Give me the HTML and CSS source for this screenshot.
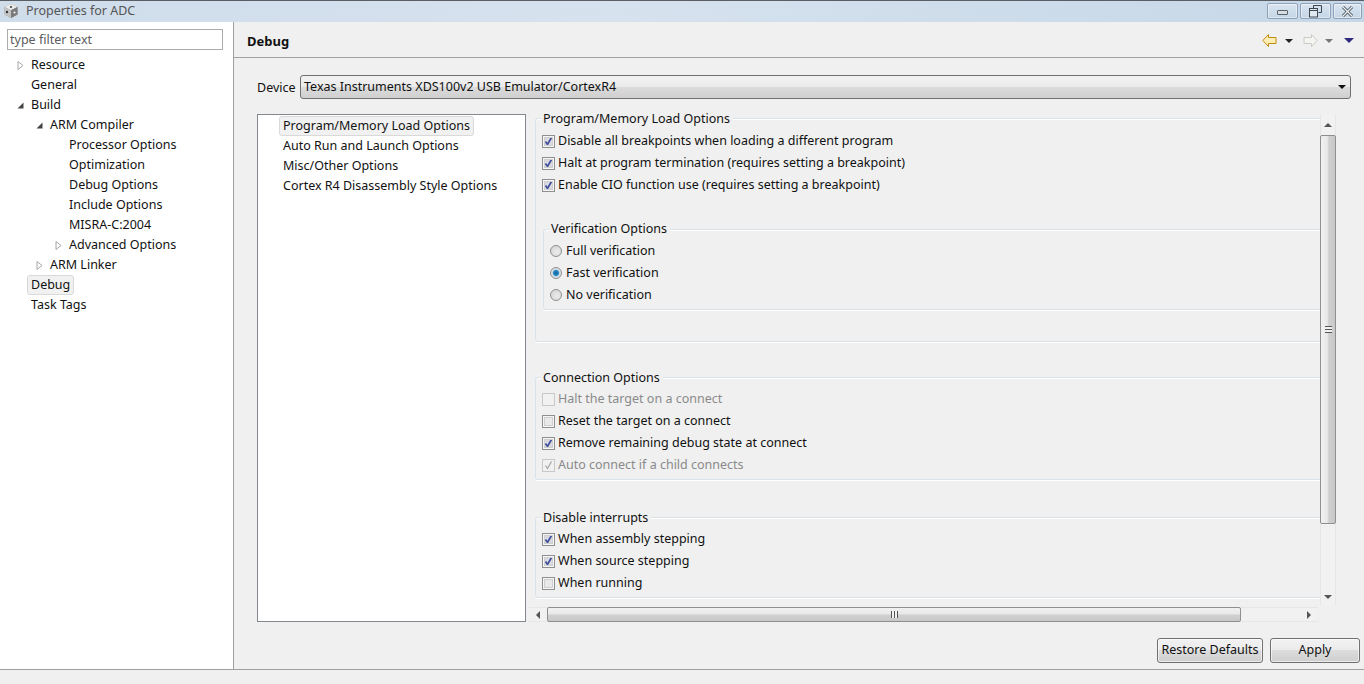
FILE: index.html
```html
<!DOCTYPE html>
<html lang="en">
<head>
<meta charset="utf-8">
<title>Properties for ADC</title>
<link rel="stylesheet" href="styles.css">
</head>
<body>
<div class="window">
  <header class="titlebar">
    <svg class="app-icon" width="16" height="16" viewBox="0 0 16 16"><path d="M8 1l6.500 3v7.500L8 15l-6.500-3.500V4z" fill="#8f8f8f"/><path d="M8 1l6.500 3L8 7.200 1.500 4z" fill="#ececec"/><path d="M1.500 4L8 7.200V15l-6.500-3.500z" fill="#c4c4c4"/><path d="M8 7.200L14.500 4v7.500L8 15z" fill="#7a7a7a"/><circle cx="8" cy="4" r="1.100" fill="#444"/><circle cx="4" cy="9" r="1.200" fill="#333"/><circle cx="11.500" cy="9.500" r="1.100" fill="#eee"/></svg>
    <span class="title-text">Properties for ADC</span>
    <div class="win-controls">
      <div class="win-btn win-min"><span class="min-glyph"></span></div>
      <div class="win-btn win-max"><svg width="13" height="13" viewBox="0 0 13 13"><path d="M4.500 3V.5h8v7H9.500" fill="none" stroke="#3c4650"/><rect x=".5" y="3.500" width="8" height="8.500" fill="#dfe7ef" stroke="#3c4650" stroke-width="1"/><path d="M1 5.500h7" stroke="#3c4650"/></svg></div>
      <div class="win-btn win-close"><svg width="13" height="11" viewBox="0 0 13 11"><path d="M2 1l9 9M11 1l-9 9" stroke="#47525c" stroke-width="3"/><path d="M2 1l9 9M11 1l-9 9" stroke="#f2f5f8" stroke-width="1.200"/></svg></div>
    </div>
  </header>

  <div class="main">
    <aside class="sidebar">
      <input class="filter" type="text" placeholder="type filter text">
      <ul class="tree">
        <li class="node l0"><svg class="twist" width="7" height="9" viewBox="0 0 7 9"><path d="M1 .5l5 4-5 4z" fill="#fff" stroke="#a6a6a6"/></svg><span class="tree-label">Resource</span></li>
        <li class="node l0"><span class="twist-gap"></span><span class="tree-label">General</span></li>
        <li class="node l0"><svg class="twist" width="7" height="9" viewBox="0 0 7 9"><path d="M6.500 1.500v6h-6z" fill="#444"/></svg><span class="tree-label">Build</span></li>
        <li class="node l1"><svg class="twist" width="7" height="9" viewBox="0 0 7 9"><path d="M6.500 1.500v6h-6z" fill="#444"/></svg><span class="tree-label">ARM Compiler</span></li>
        <li class="node l2"><span class="twist-gap"></span><span class="tree-label">Processor Options</span></li>
        <li class="node l2"><span class="twist-gap"></span><span class="tree-label">Optimization</span></li>
        <li class="node l2"><span class="twist-gap"></span><span class="tree-label">Debug Options</span></li>
        <li class="node l2"><span class="twist-gap"></span><span class="tree-label">Include Options</span></li>
        <li class="node l2"><span class="twist-gap"></span><span class="tree-label">MISRA-C:2004</span></li>
        <li class="node l2"><svg class="twist" width="7" height="9" viewBox="0 0 7 9"><path d="M1 .5l5 4-5 4z" fill="#fff" stroke="#a6a6a6"/></svg><span class="tree-label">Advanced Options</span></li>
        <li class="node l1"><svg class="twist" width="7" height="9" viewBox="0 0 7 9"><path d="M1 .5l5 4-5 4z" fill="#fff" stroke="#a6a6a6"/></svg><span class="tree-label">ARM Linker</span></li>
        <li class="node l0"><span class="twist-gap"></span><span class="tree-label selected">Debug</span></li>
        <li class="node l0"><span class="twist-gap"></span><span class="tree-label">Task Tags</span></li>
      </ul>
    </aside>

    <section class="content">
      <div class="page-head">
        <h1 class="page-title">Debug</h1>
        <div class="nav-tools">
          <svg class="nav-arrow" width="15" height="13" viewBox="0 0 15 13"><path d="M6.500.5L.8 6.500l5.700 6V9.500h7.500v-6H6.500z" fill="#fdeeb5" stroke="#c48a12"/></svg>
          <span class="drop drop-dark"></span>
          <svg class="nav-arrow nav-next" width="15" height="13" viewBox="0 0 15 13"><path d="M8.500.5l5.700 6-5.700 6V9.500H1v-6h7.500z" fill="#f4f4f0" stroke="#c9cbc6"/></svg>
          <span class="drop drop-grey"></span>
          <span class="drop drop-blue"></span>
        </div>
      </div>

      <div class="page-body">
        <div class="device-row">
          <span class="device-label">Device</span>
          <div class="combo"><span>Texas Instruments XDS100v2 USB Emulator/CortexR4</span><span class="combo-arrow"></span></div>
        </div>

        <div class="panes">
          <ul class="cat-list">
            <li class="cat"><span class="cat-label selected">Program/Memory Load Options</span></li>
            <li class="cat"><span class="cat-label">Auto Run and Launch Options</span></li>
            <li class="cat"><span class="cat-label">Misc/Other Options</span></li>
            <li class="cat"><span class="cat-label">Cortex R4 Disassembly Style Options</span></li>
          </ul>

          <div class="scroller">
            <div class="scroll-view">
              <div class="viewport">
                <div class="group group-first">
                  <div class="legend">Program/Memory Load Options</div>
                  <label class="row"><span class="check on"></span>Disable all breakpoints when loading a different program</label>
                  <label class="row"><span class="check on"></span>Halt at program termination (requires setting a breakpoint)</label>
                  <label class="row"><span class="check on"></span>Enable CIO function use (requires setting a breakpoint)</label>
                  <div class="group group-inner">
                    <div class="legend">Verification Options</div>
                    <label class="row row-radio"><span class="radio"></span>Full verification</label>
                    <label class="row row-radio"><span class="radio on"></span>Fast verification</label>
                    <label class="row row-radio"><span class="radio"></span>No verification</label>
                  </div>
                </div>
                <div class="group group-conn">
                  <div class="legend">Connection Options</div>
                  <label class="row disabled"><span class="check"></span>Halt the target on a connect</label>
                  <label class="row"><span class="check"></span>Reset the target on a connect</label>
                  <label class="row"><span class="check on"></span>Remove remaining debug state at connect</label>
                  <label class="row disabled"><span class="check on"></span>Auto connect if a child connects</label>
                </div>
                <div class="group group-int">
                  <div class="legend">Disable interrupts</div>
                  <label class="row"><span class="check on"></span>When assembly stepping</label>
                  <label class="row"><span class="check on"></span>When source stepping</label>
                  <label class="row"><span class="check"></span>When running</label>
                </div>
              </div>
              <div class="vbar">
                <div class="bar-btn"><span class="tri tri-up"></span></div>
                <div class="vthumb"><span class="grip-v"></span></div>
                <div class="bar-rest"></div>
                <div class="bar-btn bar-btn-down"><span class="tri tri-down"></span></div>
              </div>
            </div>
            <div class="hbar">
              <div class="hbtn"><span class="tri tri-left"></span></div>
              <div class="hthumb"><span class="grip-h"></span></div>
              <div class="bar-rest"></div>
              <div class="hbtn hbtn-right"><span class="tri tri-right"></span></div>
            </div>
          </div>
        </div>

        <div class="actions">
          <button class="btn btn-restore" type="button">Restore Defaults</button>
          <button class="btn btn-apply" type="button">Apply</button>
        </div>
      </div>
    </section>
  </div>
  <footer class="statusbar"></footer>
</div>
</body>
</html>
```
FILE: styles.css
```css
* { box-sizing: border-box; }
html, body { margin: 0; padding: 0; }
body {
  width: 1364px;
  height: 684px;
  overflow: hidden;
  background: #f0f0f0;
  color: #111;
  font-family: "Noto Sans", "Open Sans", sans-serif;
  font-size: 12.5px;
  line-height: 18px;
}
ul { list-style: none; margin: 0; padding: 0; }
.window { display: flex; flex-direction: column; height: 684px; }

.titlebar {
  flex: 0 0 22px;
  display: flex;
  align-items: center;
  padding: 0 2px 1px 2px;
  border-top: 1px solid #5a5f66;
  background: linear-gradient(90deg, #cfdcea 0%, #d6e2ee 45%, #c6d7e7 100%);
}
.app-icon { margin: 0 0 0 1px; flex: none; }
.title-text { margin-left: 7px; color: #555; }
.win-controls { margin-left: auto; display: flex; gap: 2px; align-self: flex-start; margin-top: 2px; }
.win-btn {
  height: 16px;
  border: 1px solid #8da2b8;
  border-radius: 2px;
  background: linear-gradient(#d9e5f0, #c4d5e5);
  box-shadow: inset 0 0 0 1px rgba(255,255,255,.45);
  display: flex;
  align-items: center;
  justify-content: center;
}
.win-min { width: 31px; }
.win-max { width: 31px; }
.win-close { width: 29px; }
.min-glyph { width: 11px; height: 5px; border: 1px solid #57626d; border-radius: 1px; background: #d8dde2; margin-top: 2px; }

.main { flex: 1; display: flex; min-height: 0; }
.sidebar {
  flex: 0 0 234px;
  background: #fff;
  border-right: 1px solid #a0a0a0;
  padding: 7px 10px 0 7px;
}
.filter {
  display: block;
  width: 216px;
  height: 21px;
  padding: 0 2px;
  border: 1px solid #ababab;
  font: inherit;
  color: #111;
  background: #fff;
  outline: 0;
}
.filter::placeholder { color: #5c5c5c; opacity: 1; }
.tree { margin-top: 5px; }
.node { height: 20px; display: flex; align-items: center; }
.l0 { padding-left: 3px; }
.l1 { padding-left: 22px; }
.l2 { padding-left: 41px; }
.twist, .twist-gap { flex: none; width: 7px; height: 9px; margin-right: 6px; display: block; margin-left: 7px; }
.tree-label { padding: 0 3px; height: 20px; line-height: 17px; border: 1px solid transparent; border-radius: 3px; margin-left: -3px; }
.tree-label.selected, .cat-label.selected {
  background: #f1f1f1;
  border-color: #d9d9d9;
}

.content { flex: 1; min-width: 0; display: flex; flex-direction: column; }
.page-head {
  flex: 0 0 36px;
  display: flex;
  align-items: center;
  padding: 2px 10px 0 13px;
  border-bottom: 1px solid #a0a0a0;
}
.page-title { margin: 0; font-size: 13px; font-weight: 700; line-height: 18px; }
.nav-tools { margin-left: auto; display: flex; align-items: center; }
.nav-arrow { display: block; flex: none; }
.nav-next { margin-left: 10px; }
.drop { width: 0; height: 0; border-style: solid; border-width: 4px 4px 0 4px; border-color: transparent; }
.drop-dark { border-top-color: #222; margin-left: 8px; }
.drop-grey { border-top-color: #777; margin-left: 7px; }
.drop-blue { border-top-color: #2e2a7e; margin-left: 11px; border-width: 5px 5px 0 5px; }

.page-body { flex: 1; min-height: 0; display: flex; flex-direction: column; padding: 17px 4px 0 23px; }
.device-row { flex: none; display: flex; align-items: center; height: 24px; padding-right: 9px; }
.device-label { flex: 0 0 43px; padding-top: 1px; }
.combo {
  flex: 1;
  height: 24px;
  display: flex;
  align-items: center;
  justify-content: space-between;
  padding: 0 4px 0 3px;
  border: 1px solid #707070;
  border-radius: 3px;
  background: linear-gradient(#f2f2f2 0%, #ebebeb 48%, #dcdcdc 50%, #cfcfcf 100%);
}
.combo-arrow { width: 0; height: 0; border-style: solid; border-width: 4px 4px 0 4px; border-color: #111 transparent transparent; }

.panes { flex: none; display: flex; margin-top: 15px; height: 508px; }
.cat-list {
  flex: 0 0 269px;
  background: #fff;
  border: 1px solid #828790;
  padding: 1px 0 0 21px;
}
.cat { height: 20px; }
.cat-label { display: inline-block; height: 20px; line-height: 17px; padding: 0 3px; border: 1px solid transparent; border-radius: 3px; }

.scroller { flex: 0 0 810px; display: flex; flex-direction: column; padding-left: 3px; }
.scroll-view { flex: 0 0 491px; display: flex; }
.viewport { width: 791px; padding: 4px 0 0 6px; }

.group {
  position: relative;
  border: 1px solid #dbe3ea;
  border-right: 0;
  border-radius: 3px 0 0 3px;
  padding: 10px 0 3px 6px;
  box-shadow: 0 1px 0 #fff, inset 0 1px 0 #fff;
}
.legend {
  position: absolute;
  top: -9px;
  left: 5px;
  padding: 0 3px 0 2px;
  background: #f0f0f0;
  height: 18px;
}
.group-first { height: 224px; padding-top: 11px; }
.group-inner { margin: 33px 0 0 1px; height: 81px; }
.group-inner .legend { top: -10px; }
.group-conn { margin-top: 35px; height: 103px; }
.group-int { margin-top: 37px; height: 81px; }
.row { display: flex; align-items: center; height: 22px; line-height: 20px; padding-bottom: 1px; }
.row.disabled { color: #8a8a8a; }

.check {
  flex: none;
  width: 13px;
  height: 13px;
  margin-right: 3px;
  margin-bottom: -1px;
  border: 1px solid #8e8f8f;
  background: #e9e9e9;
  box-shadow: inset 0 0 0 1px #f6f6f6, inset 0 0 0 2px #cfcfcf;
}
.check.on {
  background: #d9d9e0 url("data:image/svg+xml;utf8,<svg xmlns='http://www.w3.org/2000/svg' width='11' height='11' viewBox='0 0 11 11'><path d='M2.500 5.500l2 3 4-7' fill='none' stroke='%23404f9c' stroke-width='1.700'/></svg>") center no-repeat;
}
.disabled .check { border-color: #c8c8c8; background: #f1f1f1; box-shadow: none; }
.disabled .check.on {
  background: #f1f1f1 url("data:image/svg+xml;utf8,<svg xmlns='http://www.w3.org/2000/svg' width='11' height='11' viewBox='0 0 11 11'><path d='M2.500 5.500l2 3 4-7' fill='none' stroke='%23a8a8a8' stroke-width='1.300'/></svg>") center no-repeat;
}
.radio {
  flex: none;
  width: 12px;
  height: 12px;
  margin-right: 4px;
  margin-bottom: -1px;
  border: 1px solid #8e8f8f;
  border-radius: 50%;
  background: radial-gradient(circle at 60% 60%, #ececec 0%, #d0d0d0 100%);
}
.radio.on { background: radial-gradient(circle, #0f5f99 0%, #2a8fc8 38%, #d8dee3 52%, #e2e2e2 100%); }

.vbar { flex: 0 0 16px; display: flex; flex-direction: column; background: #f1f1f1; border-left: 1px solid #e6e6e6; border-right: 1px solid #e6e6e6; }
.bar-btn { flex: 0 0 21px; display: flex; align-items: center; justify-content: center; }
.bar-btn-down { flex-basis: 16px; }
.bar-rest { flex: 1; }
.vthumb {
  flex: 0 0 389px;
  margin: 0 -1px;
  border: 1px solid #8f8f8f;
  border-radius: 2px;
  background: linear-gradient(90deg, #f1f1f1, #e8e8e8 45%, #d0d0d0 55%, #c8c8c8);
  display: flex;
  align-items: center;
  justify-content: center;
}
.grip-v { width: 7px; height: 7px; background: repeating-linear-gradient(#555 0, #555 1px, #f2f2f2 1px, #f2f2f2 3px); }
.hbar {
  flex: 0 0 15px;
  margin-top: 2px;
  width: 789px;
  display: flex;
  align-items: stretch;
  background: #f1f1f1;
  border-top: 1px solid #e6e6e6;
  border-bottom: 1px solid #e6e6e6;
}
.hbtn { flex: 0 0 18px; display: flex; align-items: center; justify-content: center; }
.hthumb {
  flex: 0 0 694px;
  margin: -1px 0;
  border: 1px solid #8f8f8f;
  border-radius: 2px;
  background: linear-gradient(#f1f1f1, #e8e8e8 45%, #d0d0d0 55%, #c8c8c8);
  display: flex;
  align-items: center;
  justify-content: center;
}
.grip-h { width: 7px; height: 7px; background: repeating-linear-gradient(90deg, #555 0, #555 1px, #f2f2f2 1px, #f2f2f2 3px); }
.tri { width: 0; height: 0; border-style: solid; border-color: transparent; }
.tri-up { border-width: 0 4px 4px; border-bottom-color: #555; }
.tri-down { border-width: 4px 4px 0; border-top-color: #555; }
.tri-left { border-width: 4px 4px 4px 0; border-right-color: #555; }
.tri-right { border-width: 4px 0 4px 4px; border-left-color: #555; }

.actions { flex: none; display: flex; justify-content: flex-end; gap: 7px; margin-top: 16px; }
.btn {
  height: 25px;
  padding: 0 0 1px;
  font: inherit;
  color: #111;
  border: 1px solid #707070;
  border-radius: 3px;
  background: linear-gradient(#f2f2f2 0%, #ebebeb 48%, #dcdcdc 50%, #cfcfcf 100%);
  box-shadow: inset 0 0 0 1px rgba(255,255,255,.6);
}
.btn-restore { width: 106px; }
.btn-apply { width: 90px; }
.statusbar { flex: 0 0 15px; border-top: 1px solid #a0a0a0; background: #f0f0f0; }
```
